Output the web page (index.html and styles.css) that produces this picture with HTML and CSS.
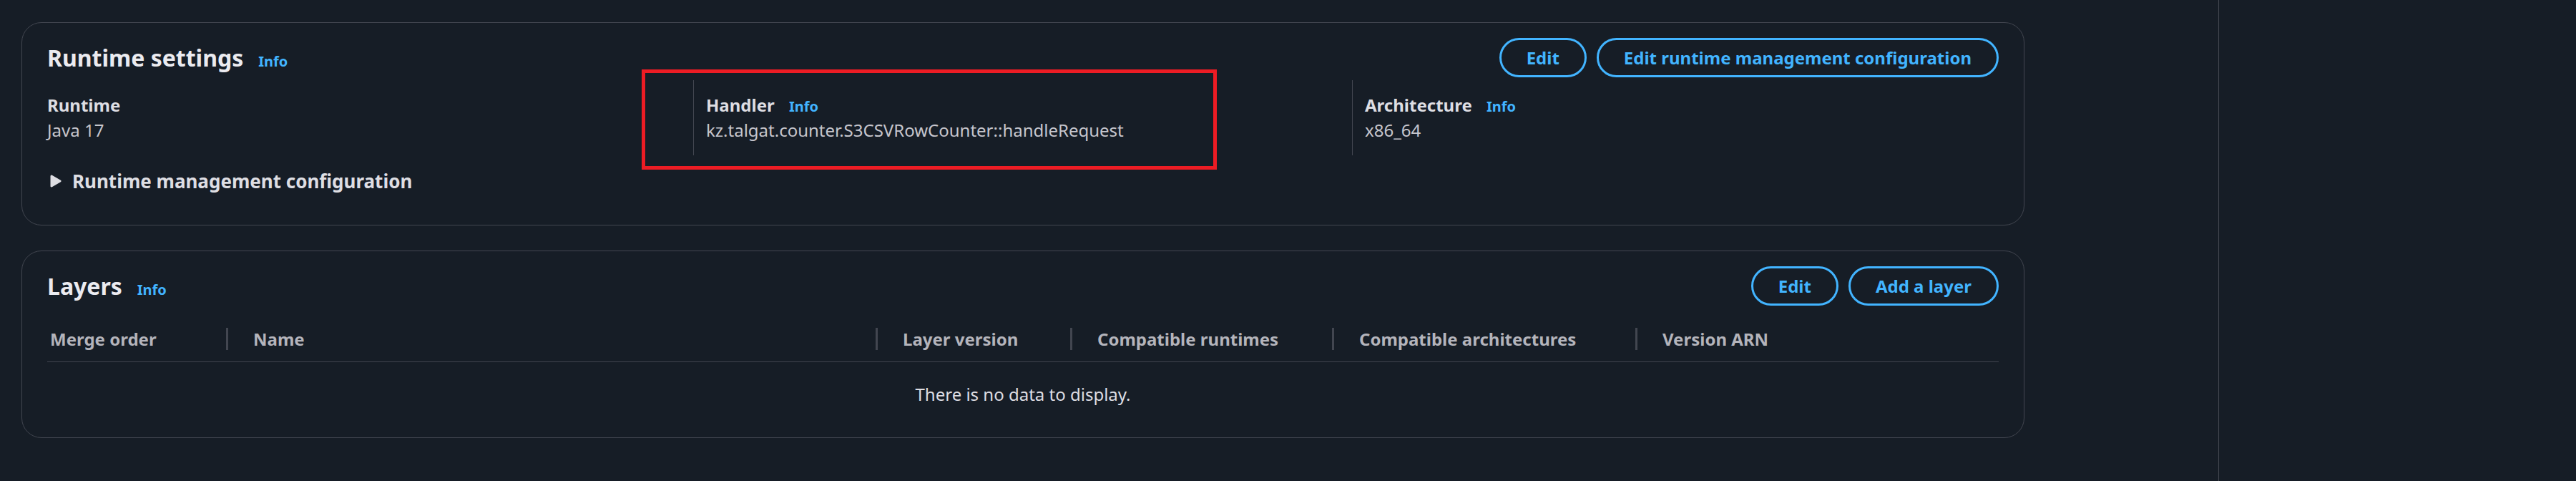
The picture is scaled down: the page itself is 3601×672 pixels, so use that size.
FILE: index.html
```html
<!DOCTYPE html>
<html lang="en">
<head>
<meta charset="utf-8">
<title>Function code</title>
<link rel="stylesheet" href="styles.css">
</head>
<body>
<div class="layout">
  <main class="content">
    <section class="card" aria-labelledby="runtime-title">
      <header class="card-header">
        <div class="heading">
          <h2 class="card-title" id="runtime-title">Runtime settings</h2>
          <a class="info" href="#runtime-info">Info</a>
        </div>
        <div class="actions">
          <button class="button" type="button">Edit</button>
          <button class="button" type="button">Edit runtime management configuration</button>
        </div>
      </header>
      <dl class="settings">
        <div class="setting">
          <dt class="setting-label">Runtime</dt>
          <dd class="setting-value">Java 17</dd>
        </div>
        <div class="setting highlighted">
          <dt class="setting-label">Handler <a class="info" href="#handler-info">Info</a></dt>
          <dd class="setting-value">kz.talgat.counter.S3CSVRowCounter::handleRequest</dd>
        </div>
        <div class="setting">
          <dt class="setting-label">Architecture <a class="info" href="#architecture-info">Info</a></dt>
          <dd class="setting-value">x86_64</dd>
        </div>
      </dl>
      <button class="expander" type="button" aria-expanded="false">
        <svg class="caret" viewBox="0 0 16 18" aria-hidden="true"><path d="M2 2 L14 9 L2 16 Z"/></svg>
        Runtime management configuration
      </button>
    </section>
    <section class="card" aria-labelledby="layers-title">
      <header class="card-header">
        <div class="heading">
          <h2 class="card-title" id="layers-title">Layers</h2>
          <a class="info" href="#layers-info">Info</a>
        </div>
        <div class="actions">
          <button class="button" type="button">Edit</button>
          <button class="button" type="button">Add a layer</button>
        </div>
      </header>
      <table class="layers">
        <colgroup>
          <col class="col-order"><col class="col-name"><col class="col-version">
          <col class="col-runtimes"><col class="col-architectures"><col>
        </colgroup>
        <thead>
          <tr>
            <th scope="col"><span class="column-label">Merge order</span></th>
            <th scope="col"><span class="column-label">Name</span></th>
            <th scope="col"><span class="column-label">Layer version</span></th>
            <th scope="col"><span class="column-label">Compatible runtimes</span></th>
            <th scope="col"><span class="column-label">Compatible architectures</span></th>
            <th scope="col"><span class="column-label">Version ARN</span></th>
          </tr>
        </thead>
        <tbody>
          <tr><td class="empty" colspan="6">There is no data to display.</td></tr>
        </tbody>
      </table>
    </section>
  </main>
  <aside class="side-panel" aria-label="Help panel"></aside>
</div>
</body>
</html>
```
FILE: styles.css
```css
:root {
  --background: #161d26;
  --divider: #424650;
  --accent: #42b4ff;
}

* { box-sizing: border-box; }

body {
  margin: 0;
  background: var(--background);
  color: #c6c6cd;
  font: 24px/35px "Noto Sans", sans-serif;
}

.layout {
  display: flex;
  min-height: 100vh;
}

.content {
  flex: 1;
  display: flex;
  flex-direction: column;
  gap: 35px;
  padding: 31px 271px 59px 30px;
}

.side-panel {
  flex: 0 0 500px;
  border-left: 1px solid var(--divider);
}

.card {
  padding: 21px 35px;
  border: 1px solid var(--divider);
  border-radius: 28px;
}

.card-header {
  display: flex;
  align-items: center;
  justify-content: space-between;
}

.heading {
  display: flex;
  align-items: baseline;
  gap: 21px;
}

.card-title {
  margin: 0;
  color: #ebebf0;
  font-size: 32px;
  line-height: 42px;
  font-weight: 700;
}

.info {
  color: var(--accent);
  font-size: 20px;
  line-height: 20px;
  font-weight: 700;
  text-decoration: none;
}

.actions {
  display: flex;
  gap: 14px;
}

.button {
  padding: 7px 35px;
  border: 3px solid var(--accent);
  border-radius: 28px;
  background: none;
  color: var(--accent);
  font: 700 24px/35px "Noto Sans", sans-serif;
}

.settings {
  display: grid;
  grid-template-columns: repeat(3, 1fr);
  gap: 35px;
  margin: 4px 0 0;
}

.setting {
  position: relative;
  padding: 17px 0 18px;
}

.setting + .setting {
  margin-left: -18px;
  padding-left: 17px;
  border-left: 1px solid var(--divider);
}

.highlighted::after {
  content: "";
  position: absolute;
  inset: -15px 172px -20px -73px;
  border: 5px solid #ed1c24;
}

.setting-label {
  color: #dedee3;
  font-weight: 700;
}

.setting-label .info { margin-left: 14px; }

.setting-value { margin: 0; }

.expander {
  display: flex;
  align-items: center;
  gap: 15px;
  margin: 16px 0 20px;
  padding: 0 0 0 4px;
  border: 0;
  background: none;
  color: #dedee3;
  font: 700 26px/40px "Noto Sans", sans-serif;
}

.caret {
  width: 16px;
  height: 18px;
  fill: currentColor;
  stroke: currentColor;
  stroke-width: 3;
  stroke-linejoin: round;
}

.layers {
  width: 100%;
  margin-top: 24px;
  border-collapse: collapse;
  table-layout: fixed;
}

.col-order { width: 253px; }
.col-name { width: 908px; }
.col-version { width: 272px; }
.col-runtimes { width: 366px; }
.col-architectures { width: 424px; }

.layers th {
  padding: 7px 0 16px;
  border-bottom: 1px solid var(--divider);
  color: #b4b4bb;
  font-weight: 700;
  text-align: left;
}

.column-label {
  display: block;
  padding-left: 35px;
  line-height: 31px;
}

th:first-child .column-label { padding-left: 4px; }

th:not(:last-child) .column-label { border-right: 3px solid var(--divider); }

.empty {
  padding: 27px 0 22px;
  color: #dedee3;
  text-align: center;
}
```
